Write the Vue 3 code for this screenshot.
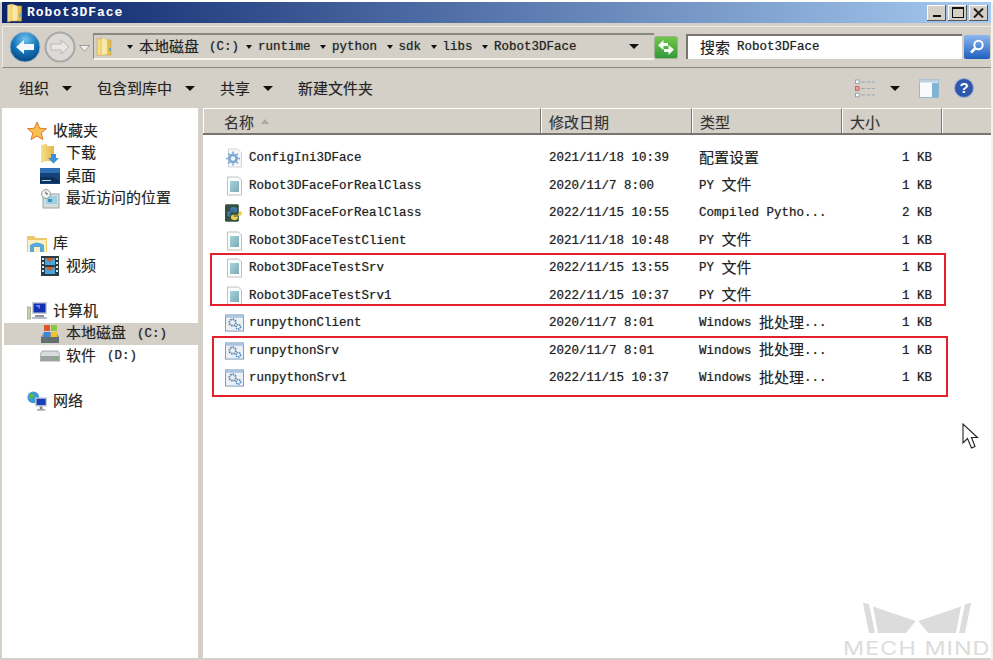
<script setup>
const trail = [
  { zh: '本地磁盘', en: '(C:)' },
  { en: 'runtime' },
  { en: 'python' },
  { en: 'sdk' },
  { en: 'libs' },
  { en: 'Robot3DFace' }
]

const tools = [
  { label: '组织', arrow: true },
  { label: '包含到库中', arrow: true },
  { label: '共享', arrow: true },
  { label: '新建文件夹', arrow: false }
]

const groups = [
  {
    head: { icon: 'star', zh: '收藏夹' },
    items: [
      { icon: 'download', zh: '下载' },
      { icon: 'desktop', zh: '桌面' },
      { icon: 'recent', zh: '最近访问的位置' }
    ]
  },
  {
    head: { icon: 'library', zh: '库' },
    items: [{ icon: 'video', zh: '视频' }]
  },
  {
    head: { icon: 'computer', zh: '计算机' },
    items: [
      { icon: 'sysdrive', zh: '本地磁盘', en: '(C:)', active: true },
      { icon: 'drive', zh: '软件', en: '(D:)' }
    ]
  },
  {
    head: { icon: 'network', zh: '网络' },
    items: []
  }
]

const columns = ['名称', '修改日期', '类型', '大小', '']

const py = ['PY ', '文件', '']
const bat = ['Windows ', '批处理', '...']

const files = [
  { icon: 'ini', name: 'ConfigIni3DFace', date: '2021/11/18 10:39', type: ['', '配置设置', ''], size: '1 KB' },
  { icon: 'doc', name: 'Robot3DFaceForRealClass', date: '2020/11/7 8:00', type: py, size: '1 KB' },
  { icon: 'python', name: 'Robot3DFaceForRealClass', date: '2022/11/15 10:55', type: ['Compiled Pytho...', '', ''], size: '2 KB' },
  { icon: 'doc', name: 'Robot3DFaceTestClient', date: '2021/11/18 10:48', type: py, size: '1 KB' },
  { icon: 'doc', name: 'Robot3DFaceTestSrv', date: '2022/11/15 13:55', type: py, size: '1 KB' },
  { icon: 'doc', name: 'Robot3DFaceTestSrv1', date: '2022/11/15 10:37', type: py, size: '1 KB' },
  { icon: 'bat', name: 'runpythonClient', date: '2020/11/7 8:01', type: bat, size: '1 KB' },
  { icon: 'bat', name: 'runpythonSrv', date: '2020/11/7 8:01', type: bat, size: '1 KB' },
  { icon: 'bat', name: 'runpythonSrv1', date: '2022/11/15 10:37', type: bat, size: '1 KB' }
]
</script>

<template>
  <div class="window">
    <svg class="sprites" width="0" height="0">
      <defs>
        <linearGradient id="g-folder" x1="0" y1="0" x2="1" y2="0">
          <stop offset="0" stop-color="#f7e08c" />
          <stop offset="1" stop-color="#e2b64a" />
        </linearGradient>
        <radialGradient id="g-back" cx="0.5" cy="0.25" r="0.8">
          <stop offset="0" stop-color="#6fc3ee" />
          <stop offset="0.55" stop-color="#1270b4" />
          <stop offset="1" stop-color="#0a3f78" />
        </radialGradient>
        <linearGradient id="g-doc" x1="0" y1="0" x2="1" y2="1">
          <stop offset="0" stop-color="#a4d4dc" />
          <stop offset="1" stop-color="#7fa9b4" />
        </linearGradient>
        <linearGradient id="g-green" x1="0" y1="0" x2="0" y2="1">
          <stop offset="0" stop-color="#74c84a" />
          <stop offset="1" stop-color="#2f9a3a" />
        </linearGradient>
        <symbol id="i-folder" viewBox="0 0 16 20">
          <path d="M1 2 L6 1 L6 3 L15 3 L15 18 L5 18 L1 19 Z" fill="url(#g-folder)" stroke="#c9a23e" stroke-width=".6" />
          <path d="M6 1 L11 3 L11 17 L6 18 Z" fill="#f9e9a8" />
          <rect x="13" y="11" width="2" height="3" fill="#5fa8d8" />
        </symbol>
        <symbol id="i-star" viewBox="0 0 20 20">
          <path d="M10 1 L12.6 7.2 L19.4 7.7 L14.2 12 L15.9 18.6 L10 15 L4.1 18.6 L5.8 12 L.6 7.7 L7.4 7.2 Z" fill="#f8c050" stroke="#e0762a" stroke-width="1" />
        </symbol>
        <symbol id="i-download" viewBox="0 0 20 20">
          <path d="M1 1 L7 0 L7 2 L14 2 L14 17 L6 17 L1 19 Z" fill="url(#g-folder)" />
          <path d="M11 10 H16 V14 H19 L13.5 19.5 L8 14 H11 Z" fill="#3f8fd8" />
        </symbol>
        <symbol id="i-desktop" viewBox="0 0 20 16">
          <rect width="20" height="16" fill="#16427c" />
          <rect y="0" width="20" height="5" fill="#2f6fb4" />
          <path d="M0 9 H13 L20 13 V15 H0 Z" fill="#0d2f5c" />
          <rect x="2" y="12" width="9" height="1" fill="#b8d4ea" />
        </symbol>
        <symbol id="i-recent" viewBox="0 0 20 20">
          <rect x="3" y="5" width="16" height="14" fill="#d6dcdc" stroke="#9aa4a4" />
          <rect x="6" y="7" width="11" height="8" fill="#9ed0e4" />
          <circle cx="6" cy="5" r="4.4" fill="#f2f4f4" stroke="#8b9696" />
          <path d="M6 2.6 V5 H8" fill="none" stroke="#555" />
          <rect x="8" y="10" width="4" height="3" fill="#3b8fb8" />
        </symbol>
        <symbol id="i-library" viewBox="0 0 20 18">
          <path d="M0 1 H7 L9 3 H20 V17 H0 Z" fill="#edc868" />
          <rect x="1" y="5" width="18" height="12" fill="#fbf0c0" />
          <path d="M3 17 V10 Q10 5 17 10 V17 H13 V12 H7 V17 Z" fill="#58a8dc" />
        </symbol>
        <symbol id="i-video" viewBox="0 0 18 20">
          <rect width="18" height="20" fill="#2a3c44" />
          <rect x="4" y="2" width="10" height="7" fill="#4aa3dc" />
          <rect x="4" y="11" width="10" height="7" fill="#4aa3dc" />
          <path d="M4 2 L9 6 L14 2 Z M4 11 L9 15 L14 11 Z" fill="#c8642c" />
          <path d="M1 2h2v2h-2zM1 6h2v2h-2zM1 10h2v2h-2zM1 14h2v2h-2zM15 2h2v2h-2zM15 6h2v2h-2zM15 10h2v2h-2zM15 14h2v2h-2z" fill="#d8e6e6" />
        </symbol>
        <symbol id="i-computer" viewBox="0 0 20 18">
          <rect x="0" y="5" width="3.5" height="12" fill="#c8d4a8" stroke="#7a8a70" stroke-width=".6" />
          <rect x="5" y="0" width="15" height="12" fill="#c9ced4" />
          <rect x="6.5" y="1.5" width="12" height="9" fill="#1230b0" />
          <path d="M8 3 H13 V7 Z" fill="#5f8ae8" />
          <rect x="8" y="13" width="9" height="2" fill="#8b939b" />
          <rect x="5" y="15" width="15" height="2" fill="#b7bdc4" />
        </symbol>
        <symbol id="i-sysdrive" viewBox="0 0 20 20">
          <path d="M1 13 L4 8 H16 L19 13 V19 H1 Z" fill="#8d9498" />
          <rect x="1" y="13" width="18" height="6" fill="#646d70" />
          <rect x="4" y="1" width="6" height="6" fill="#e0562c" />
          <rect x="11" y="1" width="6" height="6" fill="#8cc63e" />
          <rect x="4" y="8" width="6" height="5" fill="#3a86d8" />
          <rect x="11" y="8" width="6" height="5" fill="#f0c030" />
        </symbol>
        <symbol id="i-drive" viewBox="0 0 20 12">
          <path d="M2 1 H18 L20 5 V11 H0 V5 Z" fill="#d8dcdc" stroke="#8b9090" stroke-width=".7" />
          <rect x="0.5" y="6" width="19" height="5" fill="#9ba2a2" />
          <rect x="15" y="7.5" width="2.5" height="2" fill="#5cc04a" />
        </symbol>
        <symbol id="i-network" viewBox="0 0 22 22">
          <circle cx="7" cy="7" r="6.5" fill="#3f9ad8" />
          <path d="M3 3 Q7 2 8 5 L5 9 L2 7 Z" fill="#5cb84a" />
          <rect x="9" y="7" width="13" height="10" fill="#c4ccd2" />
          <rect x="10.5" y="8.5" width="10" height="7" fill="#1a3eb8" />
          <rect x="14" y="17" width="3" height="3" fill="#7e868c" />
          <rect x="11" y="20" width="9" height="1.5" fill="#8e969c" />
        </symbol>
        <symbol id="i-ini" viewBox="0 0 18 20">
          <path d="M3 1 H12 L16 5 V19 H3 Z" fill="#f6f7f8" stroke="#c6ccd2" stroke-width=".8" />
          <circle cx="7.5" cy="10.5" r="5" fill="#7fa8d0" />
          <circle cx="7.5" cy="10.5" r="2.2" fill="#eef4fa" />
          <path d="M7.5 3.5 V17.5 M.5 10.5 H14.5 M2.5 5.5 L12.5 15.5 M12.5 5.5 L2.5 15.5" stroke="#7fa8d0" stroke-width="1.6" stroke-dasharray="2.2 9.8" />
        </symbol>
        <symbol id="i-doc" viewBox="0 0 18 20">
          <path d="M2 1 H13 L16 4 V19 H2 Z" fill="#fbfcfc" stroke="#b4bac0" stroke-width=".9" />
          <rect x="4.5" y="5" width="9" height="11" fill="url(#g-doc)" />
        </symbol>
        <symbol id="i-python" viewBox="0 0 22 20">
          <rect x="0" y="0" width="16" height="20" rx="1.5" fill="#33503f" />
          <path d="M10 3 C6 3 6 5 6 7 H11 V8 H4 C2 8 2 14 4 14 H6 V11 C6 9.5 7 9 8 9 H12 C14 9 14 8 14 7 V5 C14 3.5 12 3 10 3 Z" fill="#3f78b4" />
          <path d="M11 18 C15 18 15 16 15 14 H10 V13 H18 C20 13 20 8 18 8 H16 V10 C16 11.5 15 12 14 12 H9 C8 12 7 13 7 14 V16 C7 17.5 9 18 11 18 Z" fill="#f0cc50" />
        </symbol>
        <symbol id="i-bat" viewBox="0 0 20 18">
          <rect x=".5" y=".5" width="19" height="17" fill="#eaf0f6" stroke="#7a98b8" />
          <rect x=".5" y=".5" width="19" height="3" fill="#a8c4e0" />
          <circle cx="8" cy="8.5" r="3.4" fill="none" stroke="#5d7e9e" stroke-width="2" stroke-dasharray="1.6 1" />
          <circle cx="14" cy="13" r="2.4" fill="none" stroke="#3f82c0" stroke-width="1.6" stroke-dasharray="1.4 .8" />
        </symbol>
      </defs>
    </svg>

    <header class="titlebar">
      <svg class="title-icon"><use href="#i-folder" /></svg>
      <span class="title-text">Robot3DFace</span>
      <div class="caption-btns">
        <span class="caption-btn"><i class="cap-min"></i></span>
        <span class="caption-btn"><i class="cap-max"></i></span>
        <span class="caption-btn cap-close">
          <svg width="11" height="10" viewBox="0 0 11 10"><path d="M1 0.5 L10 9.5 M10 0.5 L1 9.5" stroke="#222" stroke-width="2" /></svg>
        </span>
      </div>
    </header>

    <div class="addressbar">
      <svg class="nav-btn" width="32" height="32" viewBox="0 0 32 32">
        <circle cx="16" cy="16" r="15" fill="url(#g-back)" stroke="#9bb4c8" />
        <path d="M7 16 L15 9 V13 H25 V19 H15 V23 Z" fill="#f4f8fb" />
      </svg>
      <svg class="nav-btn" width="32" height="32" viewBox="0 0 32 32">
        <circle cx="16" cy="16" r="14.5" fill="#dcdad6" stroke="#a8a8a8" stroke-width="2" />
        <path d="M25 16 L17 9 V13 H7 V19 H17 V23 Z" fill="#e8e7e3" stroke="#b8b8b4" />
      </svg>
      <svg class="nav-drop" width="11" height="7" viewBox="0 0 11 7"><path d="M.5 .5 H10.5 L5.5 6.5 Z" fill="#f2f1ee" stroke="#9a9a9a" /></svg>

      <div class="crumbs">
        <svg class="crumb-folder"><use href="#i-folder" /></svg>
        <span v-for="c in trail" :key="c.en" class="crumb">
          <i class="arrow small"></i>
          <span v-if="c.zh" class="zh">{{ c.zh }}</span>
          <span v-if="c.zh" class="gap"></span>
          <span class="en">{{ c.en }}</span>
        </span>
        <i class="arrow crumbs-drop"></i>
      </div>

      <div class="refresh">
        <svg width="24" height="23" viewBox="0 0 24 23">
          <rect x=".5" y=".5" width="23" height="22" rx="2" fill="url(#g-green)" stroke="#9ab494" />
          <path d="M4 9.5 L9.5 4 V7 H14 V10 H9.5 V14 Z M20 13.5 L14.5 19 V16 H10 V13 H14.5 V9 Z" fill="#f6faf2" />
        </svg>
      </div>

      <div class="search">
        <span class="zh">搜索</span>
        <span class="en">Robot3DFace</span>
      </div>
      <div class="search-btn">
        <svg width="16" height="16" viewBox="0 0 16 16">
          <circle cx="9.5" cy="6" r="4.2" fill="none" stroke="#fff" stroke-width="2" />
          <path d="M6.5 9 L2 13.5" stroke="#fff" stroke-width="2.6" />
        </svg>
      </div>
    </div>

    <nav class="toolbar">
      <div v-for="t in tools" :key="t.label" class="tool">
        <span class="zh">{{ t.label }}</span>
        <i v-if="t.arrow" class="arrow"></i>
      </div>
      <div class="tool-right">
        <svg width="20" height="19" viewBox="0 0 20 19">
          <path d="M6 3 H20 M6 9.5 H20 M6 16 H20" stroke="#9aa8b4" stroke-width="1.2" stroke-dasharray="4 1.5" />
          <rect x=".5" y="1" width="3.6" height="3.6" fill="#fff" stroke="#7d9ab4" stroke-width=".8" />
          <rect x=".5" y="7.6" width="3.6" height="3.6" fill="#f0a0a0" stroke="#c05050" stroke-width=".8" />
          <rect x=".5" y="14.2" width="3.6" height="3.6" fill="#fff" stroke="#7d9ab4" stroke-width=".8" />
        </svg>
        <i class="arrow"></i>
        <svg class="pane-icon" width="20" height="19" viewBox="0 0 20 19">
          <rect x=".5" y=".5" width="19" height="18" fill="#f8fafc" stroke="#9fb6c8" />
          <rect x=".5" y=".5" width="19" height="3" fill="#bcd0e0" />
          <rect x="13" y="4" width="6.5" height="14.5" fill="#7fb4d4" />
        </svg>
        <svg width="20" height="20" viewBox="0 0 20 20">
          <circle cx="10" cy="10" r="9.5" fill="#2f58ac" stroke="#9ab0d8" />
          <text x="10" y="15" class="help-mark">?</text>
        </svg>
      </div>
    </nav>

    <main class="body">
      <aside class="sidebar">
        <section v-for="g in groups" :key="g.head.zh" class="tree-group">
          <div class="tree-row head">
            <svg class="tree-icon"><use :href="`#i-${g.head.icon}`" /></svg>
            <span class="zh">{{ g.head.zh }}</span>
          </div>
          <div v-for="it in g.items" :key="it.zh" class="tree-row child" :class="{ active: it.active }">
            <svg class="tree-icon"><use :href="`#i-${it.icon}`" /></svg>
            <span class="zh">{{ it.zh }}</span>
            <span v-if="it.en" class="en drive-letter">{{ it.en }}</span>
          </div>
        </section>
      </aside>

      <section class="list">
        <div class="list-head grid">
          <div v-for="(c, i) in columns" :key="i" class="col-head" :class="{ first: i === 0 }">
            <span class="zh">{{ c }}</span>
            <i v-if="i === 0" class="sort-mark"></i>
          </div>
        </div>

        <div class="rows">
          <div v-for="(f, i) in files" :key="i" class="grid file-row">
            <div class="name-cell">
              <svg class="file-icon"><use :href="`#i-${f.icon}`" /></svg>
              <span class="en">{{ f.name }}</span>
            </div>
            <span class="en date-cell">{{ f.date }}</span>
            <span class="type-cell"><span class="en pre">{{ f.type[0] }}</span><span class="zh">{{ f.type[1] }}</span><span class="en">{{ f.type[2] }}</span></span>
            <span class="en size-cell">{{ f.size }}</span>
          </div>

          <div class="redbox box-a"></div>
          <div class="redbox box-b"></div>
        </div>

        <svg class="cursor" width="17" height="27" viewBox="0 0 17 27">
          <path d="M1 1 V20 L5.5 15.5 L9.5 25 L13 23.5 L9.5 14.5 H15.5 Z" fill="#fff" stroke="#222" stroke-width="1.1" />
        </svg>

        <div class="watermark">
          <svg width="108" height="30" viewBox="0 0 108 30">
            <path d="M0 0 L6 1 L12 30 L6 30 Z M10 3.5 L52.7 18 L43 30 L15 30 Z M108 0 L102 1 L96 30 L102 30 Z M98 3.5 L55.3 18 L65 30 L93 30 Z" fill="#dcdcdc" />
          </svg>
          <span class="wm-text">MECH MIND</span>
        </div>
      </section>
    </main>
  </div>
</template>

<style>
html,
body {
  margin: 0;
  background: #fff;
}
</style>

<style scoped>
.window {
  width: 993px;
  height: 660px;
  box-sizing: border-box;
  padding: 2px;
  display: flex;
  flex-direction: column;
  background: #d4d0c8;
  box-shadow: inset 0 2px 0 #fff, inset -2px 0 0 #f2f1ee;
  overflow: hidden;
  color: #222;
  font-family: "Liberation Mono", monospace;
}

.sprites {
  position: absolute;
}

.zh {
  font-family: "Noto Sans CJK SC", sans-serif;
  font-size: 15px;
  margin-bottom: 4px;
  text-shadow: 0 0 1px rgba(0, 0, 0, 0.25);
}

.en {
  font-family: "Liberation Mono", monospace;
  font-size: 12.5px;
  text-shadow: 0 0 1px rgba(0, 0, 0, 0.45);
}

.pre {
  white-space: pre;
}

.arrow {
  display: inline-block;
  width: 0;
  height: 0;
  border-left: 5px solid transparent;
  border-right: 5px solid transparent;
  border-top: 5px solid #111;
}

.arrow.small {
  border-left-width: 3.5px;
  border-right-width: 3.5px;
  border-top-width: 4px;
}

.titlebar {
  height: 21px;
  flex: none;
  display: flex;
  align-items: center;
  padding-left: 4px;
  background: linear-gradient(to right, #0a246a, #a6caf0);
}

.title-icon {
  width: 17px;
  height: 20px;
  margin-top: 1px;
}

.title-text {
  margin-left: 4px;
  font-family: "Liberation Mono", monospace;
  font-weight: 700;
  font-size: 13px;
  letter-spacing: 0.95px;
  color: #fff;
}

.caption-btns {
  margin-left: auto;
  display: flex;
  gap: 2px;
  padding-right: 3px;
}

.caption-btn {
  width: 19px;
  height: 16px;
  display: flex;
  align-items: center;
  justify-content: center;
  background: #d4d0c8;
  box-shadow: inset -1px -1px 0 #555, inset 1px 1px 0 #fff;
}

.cap-min {
  width: 8px;
  height: 2px;
  background: #111;
  margin-top: 7px;
}

.cap-max {
  width: 10px;
  height: 8px;
  border: 1px solid #111;
  border-top-width: 2px;
}

.addressbar {
  height: 42px;
  flex: none;
  margin-top: 3px;
  box-sizing: border-box;
  display: flex;
  align-items: center;
  padding-left: 6px;
  border-top: 1px solid #ecebe6;
  border-left: 1px solid #ecebe6;
  border-bottom: 1px solid #8a8880;
}

.nav-btn {
  flex: none;
}

.nav-btn + .nav-btn {
  margin-left: 3px;
}

.nav-drop {
  margin: 2px 0 0 3px;
  flex: none;
}

.crumbs {
  width: 561px;
  height: 27px;
  box-sizing: border-box;
  margin: 0 0 1px 3px;
  flex: none;
  display: flex;
  align-items: center;
  padding-left: 2px;
  position: relative;
  border-top: 2px solid #8a8880;
  border-left: 1px solid #8a8880;
  border-bottom: 2px solid #f4f3ef;
}

.crumbs .zh {
  margin-bottom: 2px;
}

.crumb-folder {
  width: 16px;
  height: 20px;
  margin-right: 15px;
}

.crumb {
  display: flex;
  align-items: center;
  margin-right: 9.5px;
}

.crumb:first-of-type {
  margin-right: 7px;
}

.crumb .arrow {
  margin-right: 6px;
}

.crumb .gap {
  width: 10px;
}

.crumbs-drop {
  position: absolute;
  right: 15px;
  top: 9px;
}

.refresh {
  width: 24px;
  flex: none;
  display: flex;
  justify-content: center;
}

.search {
  width: 276px;
  height: 25px;
  margin: 0 0 2px 8px;
  box-sizing: border-box;
  flex: none;
  display: flex;
  align-items: center;
  gap: 7px;
  padding-left: 12px;
  background: #fff;
  border-top: 2px solid #77756e;
  border-left: 2px solid #77756e;
}

.search .zh {
  margin-bottom: 2px;
}

.search-btn {
  width: 26px;
  height: 24px;
  margin: 0 0 1px 2px;
  flex: none;
  display: flex;
  align-items: center;
  justify-content: center;
  border-radius: 2px;
  background: linear-gradient(#8cb8ec, #1f5fc0);
}

.toolbar {
  height: 40px;
  flex: none;
  display: flex;
  align-items: center;
  padding-left: 17px;
  gap: 25px;
}

.toolbar .zh {
  margin-bottom: 2px;
}

.tool {
  display: flex;
  align-items: center;
  gap: 13px;
}

.tool-right {
  margin-left: auto;
  display: flex;
  align-items: center;
  gap: 15px;
  padding-right: 17px;
}

.pane-icon {
  margin-left: 4px;
}

.help-mark {
  font-family: "Liberation Sans", sans-serif;
  font-weight: 700;
  font-size: 15px;
  text-anchor: middle;
  fill: #fff;
}

.body {
  flex: 1;
  min-height: 0;
  display: flex;
}

.sidebar {
  width: 196px;
  flex: none;
  box-sizing: border-box;
  padding-top: 12px;
  background: #fff;
}

.tree-group {
  margin-bottom: 22.5px;
}

.tree-row {
  height: 22.5px;
  display: flex;
  align-items: center;
}

.tree-row.head {
  padding-left: 25px;
}

.tree-row .tree-icon {
  margin-right: 6px;
}

.tree-row.child {
  padding-left: 38px;
}

.tree-row.active {
  margin-left: 2px;
  padding-left: 36px;
  background: #d4d0c8;
}

.tree-icon {
  width: 20px;
  height: 20px;
  flex: none;
}

.drive-letter {
  margin-left: 11px;
}

.list {
  margin-left: 5px;
  flex: 1;
  min-width: 0;
  background: #fff;
  position: relative;
  display: flex;
  flex-direction: column;
}

.grid {
  display: grid;
  grid-template-columns: 338px 151px 150px 100px 1fr;
}

.list-head {
  height: 27px;
  flex: none;
  background: #d4d0c8;
  border-bottom: 2px solid #77756e;
  box-sizing: border-box;
}

.col-head {
  display: flex;
  align-items: center;
  padding-left: 7px;
  border-left: 1px solid #fff;
  border-right: 1px solid #77756e;
  border-top: 1px solid #fff;
  color: #333;
}

.col-head .zh {
  margin-bottom: 0;
}

.col-head:last-child {
  border-right: 0;
}

.col-head.first {
  padding-left: 20px;
}

.sort-mark {
  width: 0;
  height: 0;
  margin-left: 7px;
  border-left: 4.5px solid transparent;
  border-right: 4.5px solid transparent;
  border-bottom: 5px solid #aaa;
}

.rows {
  padding-top: 9.5px;
  position: relative;
}

.file-row {
  height: 27.5px;
  align-items: center;
}

.name-cell {
  display: flex;
  align-items: center;
  gap: 5px;
  padding-left: 22px;
}

.file-icon {
  width: 19px;
  height: 20px;
  flex: none;
}

.date-cell {
  padding-left: 8px;
}

.type-cell {
  padding-left: 7px;
  display: flex;
  align-items: center;
}

.size-cell {
  text-align: right;
  padding-right: 10px;
}

.redbox {
  position: absolute;
  box-sizing: border-box;
  border: 2px solid #e3202c;
}

.box-a {
  left: 7px;
  top: 118px;
  width: 736px;
  height: 53px;
}

.box-b {
  left: 9px;
  top: 201px;
  width: 736px;
  height: 61px;
}

.cursor {
  position: absolute;
  left: 759px;
  top: 315px;
}

.watermark {
  position: absolute;
  right: 1px;
  bottom: 3px;
  width: 146px;
  display: flex;
  flex-direction: column;
  align-items: center;
  gap: 9px;
}

.wm-text {
  font-family: "Inter", sans-serif;
  font-size: 18px;
  line-height: 13px;
  letter-spacing: 0.8px;
  color: #dcdcdc;
  white-space: nowrap;
  transform: scaleX(1.3);
}
</style>
